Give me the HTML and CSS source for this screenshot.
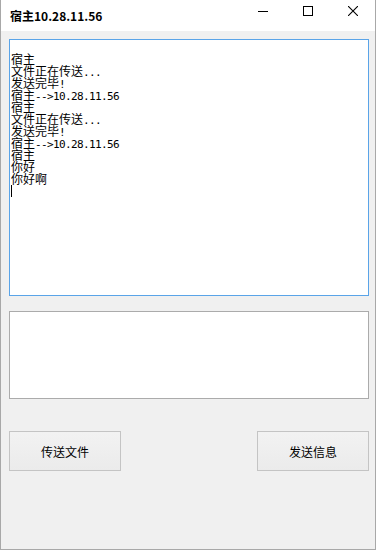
FILE: index.html
```html
<!DOCTYPE html>
<html lang="zh">
<head>
<meta charset="utf-8">
<title>宿主10.28.11.56</title>
<link rel="stylesheet" href="styles.css">
</head>
<body>
<div class="window">
  <div class="titlebar">
    <div class="title">宿主10.28.11.56</div>
    <div class="caption">
      <div class="cbtn"><svg width="10" height="10" viewBox="0 0 10 10"><path d="M0 5.5H10" stroke="#000" stroke-width="1"/></svg></div>
      <div class="cbtn"><svg width="10" height="10" viewBox="0 0 10 10"><rect x="0.5" y="0.5" width="9" height="9" fill="none" stroke="#000" stroke-width="1"/></svg></div>
      <div class="cbtn"><svg width="10" height="10" viewBox="0 0 10 10"><path d="M0 0L10 10M10 0L0 10" stroke="#000" stroke-width="1.1"/></svg></div>
    </div>
  </div>
  <div class="client">
    <div class="log">
      <div class="line">&nbsp;</div>
      <div class="line">宿主</div>
      <div class="line">文件正在传送<span class="asc">...</span></div>
      <div class="line">发送完毕<span class="asc">!</span></div>
      <div class="line">宿主<span class="asc">--&gt;10.28.11.56</span></div>
      <div class="line">宿主</div>
      <div class="line">文件正在传送<span class="asc">...</span></div>
      <div class="line">发送完毕<span class="asc">!</span></div>
      <div class="line">宿主<span class="asc">--&gt;10.28.11.56</span></div>
      <div class="line">宿主</div>
      <div class="line">你好</div>
      <div class="line">你好啊</div>
      <div class="line"><span class="caret"></span></div>
    </div>
    <div class="input"></div>
    <div class="buttons">
      <div class="btn">传送文件</div>
      <div class="btn">发送信息</div>
    </div>
  </div>
</div>
</body>
</html>
```

FILE: styles.css
```css
html, body {
  margin: 0;
  padding: 0;
  background: #ffffff;
}
body {
  font-family: "Noto Sans CJK SC", "Liberation Sans", sans-serif;
  font-size: 12px;
  color: #000;
}
.window {
  width: 376px;
  height: 550px;
  box-sizing: border-box;
  border: 1px solid #a8a8a8;
  border-top: none;
  display: flex;
  flex-direction: column;
  background: #f0f0f0;
}
.titlebar {
  height: 31px;
  background: #ffffff;
  display: flex;
  align-items: stretch;
  justify-content: space-between;
  flex-shrink: 0;
}
.title {
  font-weight: bold;
  font-size: 12px;
  padding-left: 9px;
  display: flex;
  align-items: center;
  padding-bottom: 1px;
}
.caption {
  display: flex;
}
.cbtn {
  width: 45px;
  display: flex;
  justify-content: center;
  align-items: flex-start;
  padding-top: 6px;
  box-sizing: border-box;
}
.client {
  flex: 1;
  padding: 8px 6px 0 8px;
  display: flex;
  flex-direction: column;
}
.log {
  height: 257px;
  box-sizing: border-box;
  border: 1px solid #5aa4e8;
  background: #fff;
  padding: 1px 0 0 1px;
  font-size: 12px;
  line-height: 12px;
}
.line {
  height: 12px;
  white-space: pre;
}
.asc {
  font-family: "DejaVu Sans Mono", "Liberation Mono", monospace;
  font-size: 11px;
  letter-spacing: -0.62px;
}
.caret {
  display: inline-block;
  width: 1px;
  height: 12px;
  background: #000;
  vertical-align: top;
}
.input {
  margin-top: 15px;
  height: 88px;
  box-sizing: border-box;
  border: 1px solid #ababab;
  background: #fff;
}
.buttons {
  margin-top: 32px;
  display: flex;
  justify-content: space-between;
}
.btn {
  width: 112px;
  height: 40px;
  box-sizing: border-box;
  border: 1px solid #c4c4c4;
  background: linear-gradient(#f2f2f2, #ebebeb);
  display: flex;
  align-items: center;
  justify-content: center;
  font-size: 12px;
}
```
